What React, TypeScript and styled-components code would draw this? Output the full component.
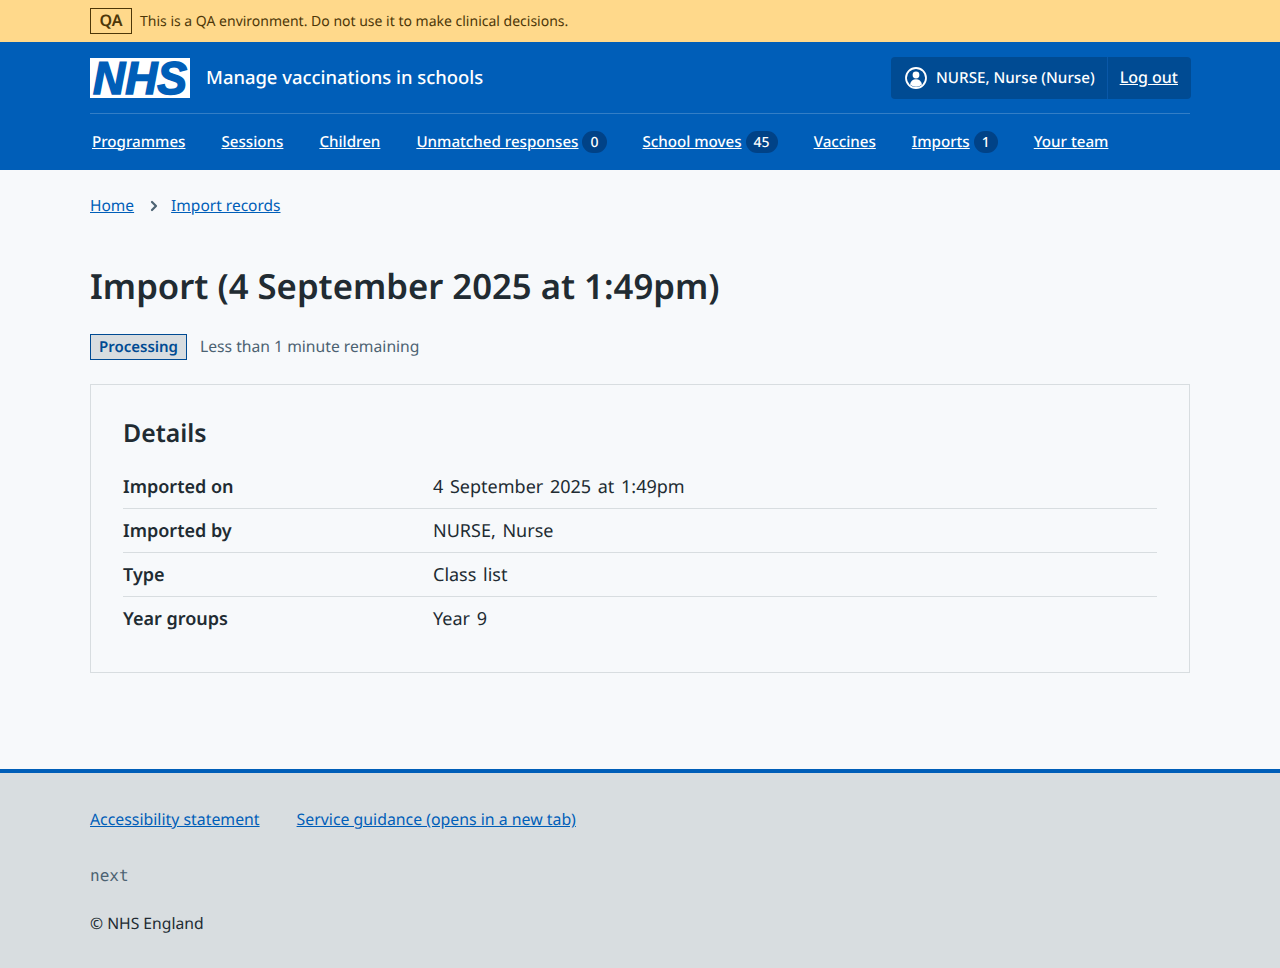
import styled, { createGlobalStyle } from 'styled-components';

const GlobalStyle = createGlobalStyle`
  html, body { margin: 0; padding: 0; background: #f7f9fb; }
  body {
    font-family: "Noto Sans", "Open Sans", sans-serif;
    color: #212b32;
    text-rendering: geometricPrecision;
  }
  * { box-sizing: border-box; }
`;

const Wrap = styled.div`
  width: 1100px;
  margin: 0 auto;
`;

const Banner = styled.div`
  background: #ffd98b;
  height: 42px;
  color: #4d3708;
  font-size: 14px;
`;

const BannerRow = styled(Wrap)`
  height: 100%;
  display: flex;
  align-items: center;
  gap: 8px;
`;

const EnvTag = styled.span`
  border: 1px solid #4d3708;
  width: 42px;
  height: 26px;
  padding-bottom: 2px;
  font-size: 16px;
  font-weight: 600;
  display: flex;
  align-items: center;
  justify-content: center;
`;

const Header = styled.header`
  background: #005eb8;
  height: 128px;
  color: #fff;
`;

const TopRow = styled(Wrap)`
  height: 72px;
  padding-top: 15px;
  display: flex;
  justify-content: space-between;
  align-items: flex-start;
  border-bottom: 1px solid rgba(255, 255, 255, 0.2);
`;

const Brand = styled.div`
  display: flex;
  align-items: center;
  gap: 16px;
  height: 40px;
  margin-top: 1px;
`;

const BrandName = styled.span`
  padding-bottom: 2px;
  font-size: 18.4px;
  font-weight: 500;
`;

const Logo = styled.svg`
  display: block;
  width: 100px;
  height: 40px;
  background: #fff;
`;

const Account = styled.div`
  display: flex;
  align-items: center;
  height: 42px;
  margin-right: -1px;
  background: #004b93;
  border-radius: 4px;
  font-weight: 500;
`;

const AccountUser = styled.div`
  display: flex;
  align-items: center;
  gap: 9px;
  height: 100%;
  padding: 0 12px 0 14px;
  font-size: 15.2px;
`;

const AccountLink = styled.a`
  display: flex;
  align-items: center;
  height: 100%;
  padding: 0 13px 2px 12px;
  color: #fff;
  font-size: 16px;
  text-decoration: underline;
  border-left: 1px solid #0a58a8;
`;

const Nav = styled(Wrap)`
  height: 56px;
  padding: 0 0 1px 2px;
  display: flex;
  align-items: center;
  gap: 36px;
  font-size: 15.15px;
  font-weight: 500;
`;

const NavItem = styled.a`
  display: flex;
  align-items: center;
  gap: 4px;
  color: #fff;
`;

const NavLabel = styled.span`
  text-decoration: underline;
`;

const Count = styled.span`
  min-width: 24px;
  height: 22px;
  padding: 1px 8px 0;
  border-radius: 11px;
  background: #004287;
  font-size: 14px;
  font-weight: 500;
  display: flex;
  align-items: center;
  justify-content: center;
`;

const Crumbs = styled(Wrap)`
  padding-top: 23px;
  height: 72px;
  display: flex;
  align-items: flex-start;
  gap: 13px;
  font-size: 15.5px;
  line-height: 24px;
`;

const Link = styled.a`
  color: #005eb8;
  text-decoration: underline;
`;

const Chevron = styled.svg`
  width: 11px;
  height: 24px;
  margin-top: 1px;
  color: #4c6272;
`;

const Main = styled(Wrap)`
  height: 527px;
  padding-top: 23px;
`;

const Title = styled.h1`
  margin: 0 0 25px;
  font-size: 34.7px;
  line-height: 44px;
  font-weight: 600;
`;

const StatusRow = styled.div`
  display: flex;
  align-items: center;
  gap: 13px;
  height: 26px;
  margin-bottom: 24px;
`;

const StatusTag = styled.span`
  height: 26px;
  padding: 0 8px;
  border: 1px solid #004b93;
  background: #d8dde0;
  color: #004b93;
  font-size: 15px;
  font-weight: 600;
  display: flex;
  align-items: center;
`;

const StatusNote = styled.span`
  padding-bottom: 2px;
  font-size: 15.7px;
  color: #4c6272;
`;

const Card = styled.section`
  border: 1px solid #d8dde0;
  padding: 32px;
  height: 289px;
`;

const CardTitle = styled.h2`
  margin: 0 0 16px;
  font-size: 24.8px;
  line-height: 32px;
  font-weight: 600;
`;

const Row = styled.div<{ $last?: boolean }>`
  display: grid;
  grid-template-columns: 310px 1fr;
  height: 44px;
  align-items: center;
  font-size: 18px;
  border-bottom: ${(p) => (p.$last ? 'none' : '1px solid #d8dde0')};
`;

const Term = styled.div`
  font-weight: 600;
`;

const Value = styled.div`
  word-spacing: 2px;
`;

const Footer = styled.footer`
  background: #d8dde0;
  border-top: 4px solid #005eb8;
  height: 199px;
`;

const FooterInner = styled(Wrap)`
  padding-top: 35px;
  font-size: 15.85px;
`;

const FooterLinks = styled.div`
  display: flex;
  gap: 37px;
  line-height: 22px;
`;

const Version = styled.div`
  margin-top: 34px;
  font: 16px/24px "DejaVu Sans Mono", monospace;
  color: #4c6272;
`;

const Copyright = styled.div`
  margin-top: 23px;
  font-size: 15.7px;
  line-height: 24px;
`;

const rows = [
  ['Imported on', '4 September 2025 at 1:49pm'],
  ['Imported by', 'NURSE, Nurse'],
  ['Type', 'Class list'],
  ['Year groups', 'Year 9'],
];

const navItems: { label: string; count?: number }[] = [
  { label: 'Programmes' },
  { label: 'Sessions' },
  { label: 'Children' },
  { label: 'Unmatched responses', count: 0 },
  { label: 'School moves', count: 45 },
  { label: 'Vaccines' },
  { label: 'Imports', count: 1 },
  { label: 'Your team' },
];

export default function App() {
  return (
    <>
      <GlobalStyle />
      <Banner>
        <BannerRow>
          <EnvTag>QA</EnvTag>
          <span>This is a QA environment. Do not use it to make clinical decisions.</span>
        </BannerRow>
      </Banner>
      <Header>
        <TopRow>
          <Brand>
            <Logo viewBox="0 0 100 40">
              <text
                x="3"
                y="36"
                fill="#005eb8"
                stroke="#005eb8"
                strokeWidth="1.6"
                fontFamily="Liberation Sans, sans-serif"
                fontSize="46"
                fontStyle="italic"
                fontWeight="700"
                textLength="94"
                lengthAdjust="spacingAndGlyphs"
              >
                NHS
              </text>
            </Logo>
            <BrandName>Manage vaccinations in schools</BrandName>
          </Brand>
          <Account>
            <AccountUser>
              <svg width="22" height="22" viewBox="0 0 22 22">
                <circle cx="11" cy="11" r="10" fill="none" stroke="#fff" strokeWidth="1.8" />
                <circle cx="11" cy="8" r="3.4" fill="#fff" />
                <path d="M5 17.500c.6-3.500 3-5.200 6-5.200s5.400 1.700 6 5.200a9 9 0 0 1-12 0z" fill="#fff" />
              </svg>
              NURSE, Nurse (Nurse)
            </AccountUser>
            <AccountLink>Log out</AccountLink>
          </Account>
        </TopRow>
        <Nav>
          {navItems.map((item) => (
            <NavItem key={item.label}>
              <NavLabel>{item.label}</NavLabel>
              {item.count !== undefined && <Count>{item.count}</Count>}
            </NavItem>
          ))}
        </Nav>
      </Header>
      <Crumbs>
        <Link>Home</Link>
        <Chevron viewBox="0 0 11 24">
          <path d="M5 8l4 4-4 4" fill="none" stroke="currentColor" strokeWidth="2.200" strokeLinecap="round" strokeLinejoin="round" />
        </Chevron>
        <Link>Import records</Link>
      </Crumbs>
      <Main>
        <Title>Import (4 September 2025 at 1:49pm)</Title>
        <StatusRow>
          <StatusTag>Processing</StatusTag>
          <StatusNote>Less than 1 minute remaining</StatusNote>
        </StatusRow>
        <Card>
          <CardTitle>Details</CardTitle>
          {rows.map(([term, value], i) => (
            <Row key={term} $last={i === rows.length - 1}>
              <Term>{term}</Term>
              <Value>{value}</Value>
            </Row>
          ))}
        </Card>
      </Main>
      <Footer>
        <FooterInner>
          <FooterLinks>
            <Link>Accessibility statement</Link>
            <Link>Service guidance (opens in a new tab)</Link>
          </FooterLinks>
          <Version>next</Version>
          <Copyright>© NHS England</Copyright>
        </FooterInner>
      </Footer>
    </>
  );
}
